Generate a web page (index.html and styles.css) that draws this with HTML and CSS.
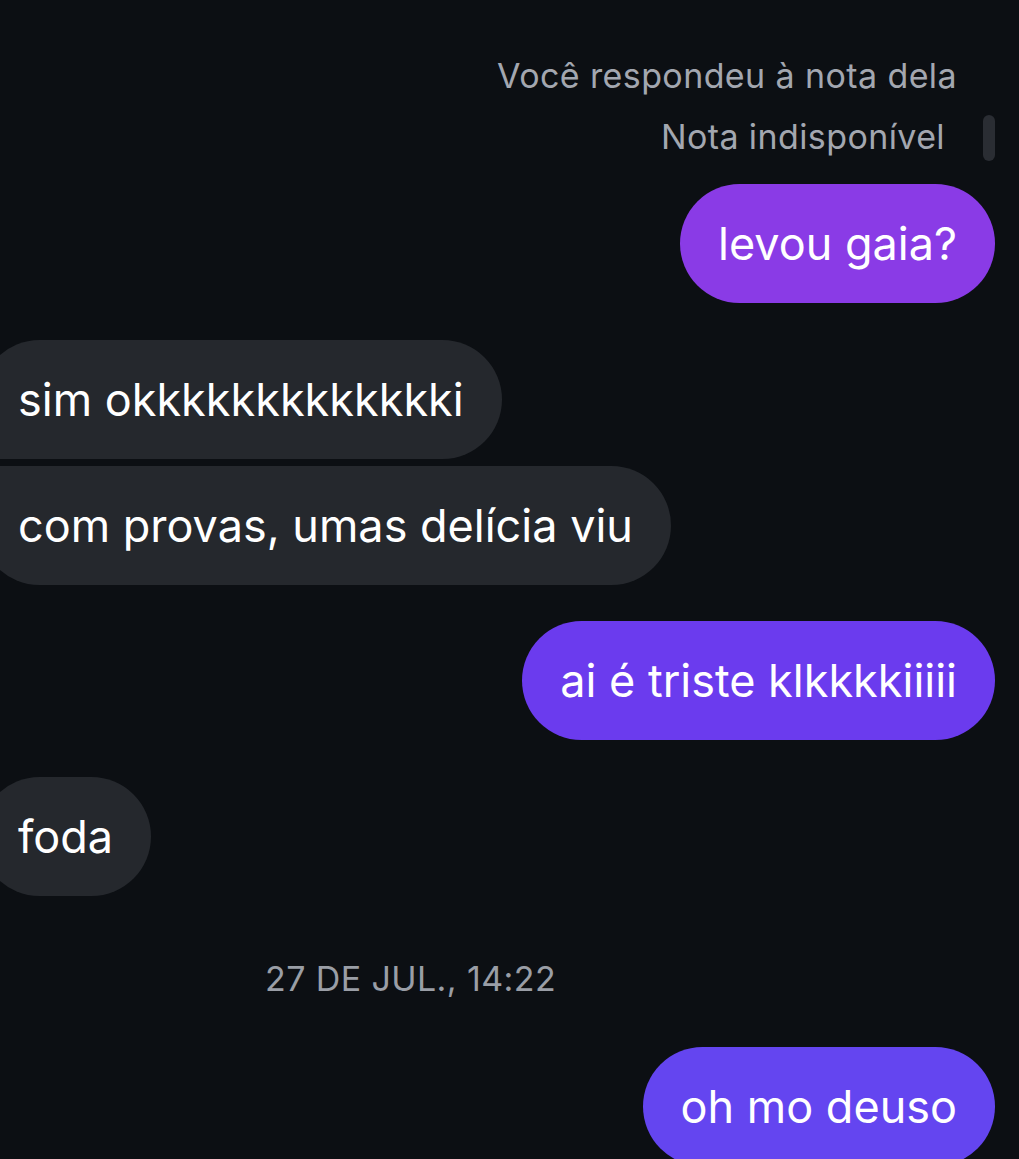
FILE: index.html
```html
<!DOCTYPE html>
<html lang="pt-BR">

<head>
  <meta charset="UTF-8">
  <meta name="viewport" content="width=device-width, initial-scale=1.0">
  <title>Conversa</title>
  <link rel="stylesheet" href="styles.css">
</head>

<body>
  <main class="thread">
    <div class="reply-note">
      <p class="reply-label">Você respondeu à nota dela</p>
      <div class="reply-quote">
        <span>Nota indisponível</span>
        <span class="quote-bar"></span>
      </div>
    </div>

    <div class="msg out out-1">levou gaia?</div>

    <div class="group">
      <div class="msg in first">sim okkkkkkkkkkkkki</div>
      <div class="msg in last">com provas, umas delícia viu</div>
    </div>

    <div class="msg out out-2">ai é triste klkkkkiiiii</div>

    <div class="msg in">foda</div>

    <p class="timestamp">27 DE JUL., 14:22</p>

    <div class="msg out out-3">oh mo deuso</div>
  </main>
</body>

</html>
```

FILE: styles.css
```css
* {
  box-sizing: border-box;
  margin: 0;
  padding: 0;
  font-family: 'Inter', 'Noto Sans', sans-serif;
}

html,
body {
  background: #0c0f13;
  height: 100%;
  overflow: hidden;
}

.thread {
  display: flex;
  flex-direction: column;
  padding: 56px 24px 0 0;
}

.reply-note {
  display: flex;
  flex-direction: column;
  align-items: flex-end;
  gap: 17px;
  color: #a3a7b0;
  font-size: 34px;
  line-height: 40px;
  letter-spacing: 0.4px;
}

.reply-label {
  margin-right: 38px;
}

.reply-quote {
  display: flex;
  align-items: center;
  gap: 38px;
}

.quote-bar {
  width: 12px;
  height: 46px;
  border-radius: 6px;
  background: #2a2d33;
  margin-top: 2px;
}

.msg {
  font-size: 45px;
  line-height: 48px;
  color: #fff;
  padding: 36px 38px 35px;
  border-radius: 60px;
  white-space: nowrap;
}

.out {
  align-self: flex-end;
}

.out-1 {
  background: #8a3be6;
  margin-top: 23px;
}

.out-2 {
  background: #6b3bee;
  margin-top: 36px;
}

.out-3 {
  background: #6445f0;
}

.in {
  align-self: flex-start;
  background: #25282d;
  margin-left: -20px;
  margin-top: 37px;
}

.group {
  display: flex;
  flex-direction: column;
  align-items: flex-start;
  gap: 7px;
  margin-top: 37px;
}

.group .in {
  margin-top: 0;
}

.in.first {
  border-bottom-left-radius: 12px;
}

.in.last {
  border-top-left-radius: 12px;
}

.timestamp {
  align-self: flex-start;
  color: #9a9ea6;
  font-size: 34px;
  line-height: 40px;
  letter-spacing: 0.4px;
  margin: 63px 0 48px 265px;
}
```
